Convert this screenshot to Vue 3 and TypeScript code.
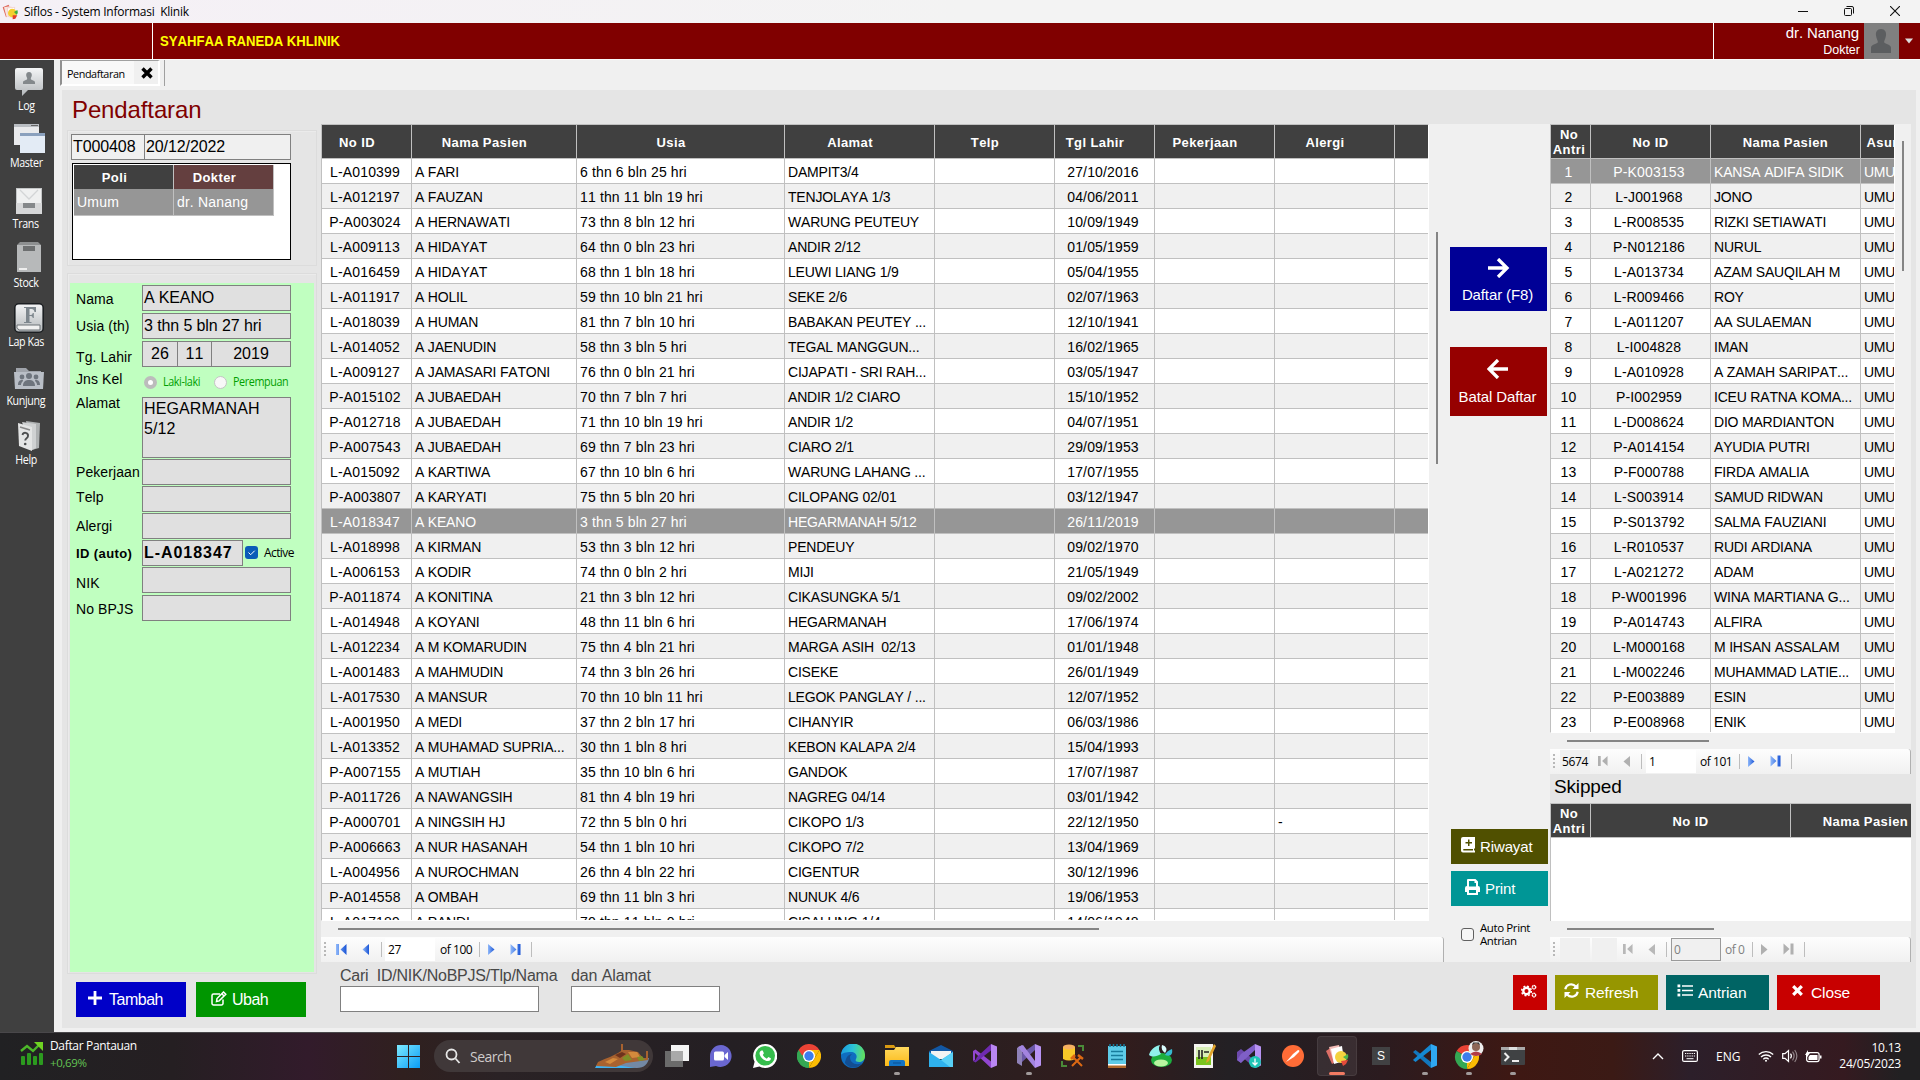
<script setup lang="ts">
interface Patient { id: string; name: string; age: string; addr: string; born: string; allergy?: string }

const rawPatients = `L-A010399|A FARI|6 thn 6 bln 25 hri|DAMPIT3/4|27/10/2016
L-A012197|A FAUZAN|11 thn 11 bln 19 hri|TENJOLAYA 1/3|04/06/2011
P-A003024|A HERNAWATI|73 thn 8 bln 12 hri|WARUNG PEUTEUY|10/09/1949
L-A009113|A HIDAYAT|64 thn 0 bln 23 hri|ANDIR 2/12|01/05/1959
L-A016459|A HIDAYAT|68 thn 1 bln 18 hri|LEUWI LIANG 1/9|05/04/1955
L-A011917|A HOLIL|59 thn 10 bln 21 hri|SEKE 2/6|02/07/1963
L-A018039|A HUMAN|81 thn 7 bln 10 hri|BABAKAN PEUTEY ...|12/10/1941
L-A014052|A JAENUDIN|58 thn 3 bln 5 hri|TEGAL MANGGUN...|16/02/1965
L-A009127|A JAMASARI FATONI|76 thn 0 bln 21 hri|CIJAPATI - SRI RAH...|03/05/1947
P-A015102|A JUBAEDAH|70 thn 7 bln 7 hri|ANDIR 1/2 CIARO|15/10/1952
P-A012718|A JUBAEDAH|71 thn 10 bln 19 hri|ANDIR 1/2|04/07/1951
P-A007543|A JUBAEDAH|69 thn 7 bln 23 hri|CIARO 2/1|29/09/1953
L-A015092|A KARTIWA|67 thn 10 bln 6 hri|WARUNG LAHANG ...|17/07/1955
P-A003807|A KARYATI|75 thn 5 bln 20 hri|CILOPANG 02/01|03/12/1947
L-A018347|A KEANO|3 thn 5 bln 27 hri|HEGARMANAH 5/12|26/11/2019
L-A018998|A KIRMAN|53 thn 3 bln 12 hri|PENDEUY|09/02/1970
L-A006153|A KODIR|74 thn 0 bln 2 hri|MIJI|21/05/1949
P-A011874|A KONITINA|21 thn 3 bln 12 hri|CIKASUNGKA 5/1|09/02/2002
L-A014948|A KOYANI|48 thn 11 bln 6 hri|HEGARMANAH|17/06/1974
L-A012234|A M KOMARUDIN|75 thn 4 bln 21 hri|MARGA ASIH  02/13|01/01/1948
L-A001483|A MAHMUDIN|74 thn 3 bln 26 hri|CISEKE|26/01/1949
L-A017530|A MANSUR|70 thn 10 bln 11 hri|LEGOK PANGLAY / ...|12/07/1952
L-A001950|A MEDI|37 thn 2 bln 17 hri|CIHANYIR|06/03/1986
L-A013352|A MUHAMAD SUPRIA...|30 thn 1 bln 8 hri|KEBON KALAPA 2/4|15/04/1993
P-A007155|A MUTIAH|35 thn 10 bln 6 hri|GANDOK|17/07/1987
P-A011726|A NAWANGSIH|81 thn 4 bln 19 hri|NAGREG 04/14|03/01/1942
P-A000701|A NINGSIH HJ|72 thn 5 bln 0 hri|CIKOPO 1/3|22/12/1950|-
P-A006663|A NUR HASANAH|54 thn 1 bln 10 hri|CIKOPO 7/2|13/04/1969
L-A004956|A NUROCHMAN|26 thn 4 bln 22 hri|CIGENTUR|30/12/1996
P-A014558|A OMBAH|69 thn 11 bln 3 hri|NUNUK 4/6|19/06/1953
L-A017189|A PANDI|70 thn 11 bln 0 hri|CISALUNG 1/4|14/06/1948`

const patients: Patient[] = rawPatients.split('\n').map((line) => {
  const [id, name, age, addr, born, allergy] = line.split('|')
  return { id, name, age, addr, born, allergy }
})
const selectedId = 'L-A018347'

const queue: [string, string][] = [
  ['P-K003153', 'KANSA ADIFA SIDIK'], ['L-J001968', 'JONO'], ['L-R008535', 'RIZKI SETIAWATI'],
  ['P-N012186', 'NURUL'], ['L-A013734', 'AZAM SAUQILAH M'], ['L-R009466', 'ROY'],
  ['L-A011207', 'AA SULAEMAN'], ['L-I004828', 'IMAN'], ['L-A010928', 'A ZAMAH SARIPAT...'],
  ['P-I002959', 'ICEU RATNA KOMA...'], ['L-D008624', 'DIO MARDIANTON'], ['P-A014154', 'AYUDIA PUTRI'],
  ['P-F000788', 'FIRDA AMALIA'], ['L-S003914', 'SAMUD RIDWAN'], ['P-S013792', 'SALMA FAUZIANI'],
  ['L-R010537', 'RUDI ARDIANA'], ['L-A021272', 'ADAM'], ['P-W001996', 'WINA MARTIANA G...'],
  ['P-A014743', 'ALFIRA'], ['L-M000168', 'M IHSAN ASSALAM'], ['L-M002246', 'MUHAMMAD LATIE...'],
  ['P-E003889', 'ESIN'], ['P-E008968', 'ENIK'],
]

const mainHeads = ['No ID', 'Nama Pasien', 'Usia', 'Alamat', 'Telp', 'Tgl Lahir', 'Pekerjaan', 'Alergi', '']
</script>

<template>
  <div class="screen">
    <svg width="0" height="0" class="defs">
      <defs>
        <linearGradient id="silver" x1="0" y1="0" x2="0" y2="1"><stop offset="0" stop-color="#f4f5f6" /><stop offset="1" stop-color="#b4b8bb" /></linearGradient>
        <linearGradient id="nav" x1="0" y1="0" x2="1" y2="0"><stop offset="0" stop-color="#8fb8fa" /><stop offset="1" stop-color="#1a55d6" /></linearGradient>
        <linearGradient id="win" x1="0" y1="0" x2="1" y2="1"><stop offset="0" stop-color="#7deaff" /><stop offset="1" stop-color="#0a9cf5" /></linearGradient>
        <linearGradient id="edge" x1="0" y1="0.3" x2="1" y2="0.4"><stop offset="0" stop-color="#1a9be0" /><stop offset=".5" stop-color="#2cc3d6" /><stop offset="1" stop-color="#62e05c" /></linearGradient>
        <linearGradient id="folder" x1="0" y1="0" x2="0" y2="1"><stop offset="0" stop-color="#ffd95e" /><stop offset="1" stop-color="#fbb917" /></linearGradient>
      </defs>
    </svg>

    <header class="titlebar">
      <svg class="app-ico" width="16" height="16" viewBox="0 0 24 24">
        <path d="M1 5l9-4 6 14-10 5z" fill="#e0675a" /><path d="M3 5l11-2 3 14-10 3z" fill="#f7e4df" />
        <path d="M8 6l11-1-1 15-8-1z" fill="#fff" stroke="#e8a59c" stroke-width=".6" />
        <circle cx="15.500" cy="13.500" r="6.500" fill="#f4cf2f" /><path d="M18 12l5-3c1 3 1 5-1 7z" fill="#3fae3c" /><path d="M16 17l7 0-3 5-4 1z" fill="#e33b2b" />
      </svg>
      <span class="app-name">Siflos - System Informasi&nbsp; Klinik</span>
      <div class="win-ctl">
        <svg width="10" height="10" viewBox="0 0 10 10"><path d="M0 5.500h10" stroke="#111" /></svg>
        <svg width="10" height="10" viewBox="0 0 10 10" fill="none" stroke="#111"><rect x=".5" y="2.500" width="7" height="7" rx="1" /><path d="M2.500 .5h5.500a1.500 1.500 0 0 1 1.500 1.500v5.500" /></svg>
        <svg width="10" height="10" viewBox="0 0 10 10"><path d="M0 0l10 10M10 0l-10 10" stroke="#111" stroke-width="1.100" /></svg>
      </div>
    </header>

    <div class="brand">
      <div class="brand-left"></div>
      <div class="brand-name"><span>SYAHFAA RANEDA KHLINIK</span></div>
      <div class="brand-user"><span class="u1">dr. Nanang</span><span class="u2">Dokter</span></div>
      <div class="avatar">
        <svg width="20" height="24" viewBox="0 0 20 24"><path d="M10 0c4 0 5.500 3 5 6.500-.4 3-1.700 5-1.900 6.500.3 2 6.400 2 6.900 5.500v5.500h-20v-5.500c.5-3.500 6.500-3.500 6.900-5.500-.2-1.500-1.500-3.500-1.900-6.500-.5-3.500 1-6.500 5-6.500z" fill="#5c5e60" /></svg>
      </div>
      <div class="drop"><svg width="8" height="6" viewBox="0 0 8 6"><path d="M0 .5h8l-4 5z" fill="#ddd" /></svg></div>
    </div>

    <div class="body">
      <nav class="side">
        <a class="nav"><svg width="30" height="30" viewBox="0 0 30 30"><path d="M3 1h24a2 2 0 0 1 2 2v18a2 2 0 0 1-2 2h-13l-6 6v-6h-5a2 2 0 0 1-2-2v-18a2 2 0 0 1 2-2z" fill="url(#silver)" /><path d="M15 5c2 0 3 1.500 2.800 3.500-.2 1.500-1 2-1 3.500.2 1.500 4.200 1 4.200 3.500v1.500h-12v-1.500c0-2.500 4-2 4.200-3.500 0-1.500-.8-2-1-3.500-.2-2 .8-3.500 2.800-3.500z" fill="#83888b" /></svg><span>Log</span></a>
        <a class="nav"><svg width="32" height="32" viewBox="0 0 32 32"><rect x="1" y="2" width="25" height="21" fill="#e9eaec" /><path d="M1 2h25v3h-25z" fill="#b9bdc2" /><path d="M18 3h7v1h-7z" fill="#666" /><rect x="7" y="11" width="25" height="20" fill="#e3ebf5" /><path d="M7 11h25v3h-25z" fill="#8aa0bd" /></svg><span>Master</span></a>
        <a class="nav"><svg width="28" height="28" viewBox="0 0 28 28"><rect x="1" y="1" width="26" height="26" fill="#c4c6c7" /><path d="M2 2h24v14h-24z" fill="#eff0f0" /><path d="M5 3l9 9 9-9" fill="none" stroke="#d3d5d6" stroke-width="1.300" /><path d="M1 16h26v11h-26z" fill="#d6d7d8" /><path d="M8 16h12v5h-12z" fill="#85888a" /></svg><span>Trans</span></a>
        <a class="nav"><svg width="26" height="32" viewBox="0 0 26 32"><path d="M4 0h18l3 3v27h-24v-27z" fill="#8d8f90" /><path d="M1 3h24v27h-24z" fill="#b7b9ba" /><path d="M7 4h12v5h-12z" fill="#6d6f70" /><path d="M3 26h8v2h-8z" fill="#eee" /></svg><span>Stock</span></a>
        <a class="nav"><svg width="30" height="30" viewBox="0 0 30 30"><rect x=".8" y=".8" width="28.400" height="28.400" rx="4" fill="url(#silver)" stroke="#1c1f22" stroke-width="1.600" /><path d="M3 22h23v5h-21q-3-2-2-5z" fill="#f1f1f1" stroke="#6d7276" /><path d="M10 4h12v5h-1.500q-.5-3-3-3h-2v6h1.500q1.500 0 1.800-2h1v5h-1q-.3-2-1.800-2h-1.500v6h2v1h-7.500v-1h2v-14h-2z" fill="#7d868d" /></svg><span>Lap Kas</span></a>
        <a class="nav"><svg width="30" height="26" viewBox="0 0 30 26"><path d="M2 2h10l3 3h12v4h-25z" fill="#9fa3aa" /><path d="M0 6h30l-1 17h-28z" fill="#b9bec6" /><g fill="#6e747d"><circle cx="15" cy="10" r="3" /><circle cx="8" cy="11" r="2.400" /><circle cx="22" cy="11" r="2.400" /><path d="M9 20c0-5 3-6 6-6s6 1 6 6zM4 19c0-4 2-5 4-5 1 0 1 0 1 1-2 2-2 3-2 4zM26 19c0-4-2-5-4-5-1 0-1 0-1 1 2 2 2 3 2 4z" /></g></svg><span>Kunjung</span></a>
        <a class="nav"><svg width="24" height="30" viewBox="0 0 24 30"><path d="M9 0l14 2-1 25-7 2z" fill="#aeb1b2" /><path d="M5 1l14 2v24l-4 2z" fill="#cfd1d2" /><path d="M1 2l14 4v24l-13-5z" fill="#e4e5e5" /><path d="M5.500 14c.5-3.500 6-2.500 5.500 1 0 2.500-2.800 2-2.800 4.500" fill="none" stroke="#4d4f50" stroke-width="1.900" /><circle cx="8.200" cy="23" r="1.300" fill="#4d4f50" /><path d="M3 6l10 3" stroke="#888" stroke-width="1.500" /></svg><span>Help</span></a>
      </nav>

      <main class="main">
        <div class="tabs">
          <div class="tab"><span>Pendaftaran</span><b><svg width="12" height="12" viewBox="0 0 12 12"><path d="M1.500 1.500l9 9M10.500 1.500l-9 9" stroke="#000" stroke-width="3.400" /></svg></b></div>
          <i class="tab-end"></i>
        </div>

        <section class="panel">
          <div class="left">
            <h1>Pendaftaran</h1>
            <div class="box box1">
              <div class="reg"><span>T000408</span><span>20/12/2022</span></div>
              <div class="poli">
                <div class="ph"><b>Poli</b><b class="dk">Dokter</b></div>
                <div class="pr"><span>Umum</span><span>dr. Nanang</span></div>
              </div>
            </div>
            <div class="box box2">
              <div class="form">
                <div class="f h28"><label>Nama</label><div class="in">A KEANO</div></div>
                <div class="f h28 us"><label>Usia (th)</label><div class="in age-in">3 thn 5 bln 27 hri</div></div>
                <div class="f h28 tg"><label>Tg. Lahir</label><div class="in trio"><span>26</span><span>11</span><span>2019</span></div></div>
                <div class="f jk"><label>Jns Kel</label><i class="radio on"></i><em>Laki-laki</em><i class="radio"></i><em>Perempuan</em></div>
                <div class="f al"><label>Alamat</label><div class="in area">HEGARMANAH<br />5/12</div></div>
                <div class="f h27 d1"><label>Pekerjaan</label><div class="in"></div></div>
                <div class="f h27"><label>Telp</label><div class="in"></div></div>
                <div class="f h27 d1"><label>Alergi</label><div class="in"></div></div>
                <div class="f h27 d2"><label class="bold">ID (auto)</label><div class="in idin">L-A018347</div>
                  <svg class="chk" width="13" height="13" viewBox="0 0 13 13"><rect width="13" height="13" rx="3" fill="#0a5cb8" /><path d="M3.500 6.500l2.200 2.200 4-4" fill="none" stroke="#fff" /></svg><span class="act">Active</span></div>
                <div class="f h28 d3"><label>NIK</label><div class="in"></div></div>
                <div class="f h28 d2"><label>No BPJS</label><div class="in"></div></div>
              </div>
            </div>
            <div class="lbtns">
              <button class="tambah"><svg width="14" height="14" viewBox="0 0 14 14"><path d="M7 0v14M0 7h14" stroke="#fff" stroke-width="2.800" /></svg><span>Tambah</span></button>
              <button class="ubah"><svg width="16" height="16" viewBox="0 0 16 16" fill="none" stroke="#fff" stroke-width="1.500"><path d="M9 3h-6.500a1.500 1.500 0 0 0-1.500 1.500v8a1.500 1.500 0 0 0 1.500 1.500h8a1.500 1.500 0 0 0 1.500-1.500v-4" /><path d="M5.500 10.500l.5-3 6.500-6.500 2.300 2.300-6.600 6.600zM10.800 2.700l2.300 2.300" /></svg><span>Ubah</span></button>
            </div>
          </div>

          <div class="rest">
            <div class="cols">
              <div class="mid">
                <div class="grid-wrap">
                  <div class="grid main-grid">
                    <div class="row head"><b v-for="(h, i) in mainHeads" :key="i">{{ h }}</b></div>
                    <div v-for="p in patients" :key="p.id" class="row" :class="{ sel: p.id === selectedId }">
                      <span class="c num">{{ p.id }}</span><span class="nm">{{ p.name }}</span><span class="num">{{ p.age }}</span><span class="nm">{{ p.addr }}</span><span></span><span class="c num">{{ p.born }}</span><span></span><span>{{ p.allergy }}</span><span></span>
                    </div>
                  </div>
                  <div class="vbar"><i class="vthumb"></i></div>
                </div>
                <div class="hbar"><i class="hthumb m"></i></div>
                <div class="pager main-pager">
                  <i class="grip"></i>
                  <svg class="first" width="11" height="11" viewBox="0 0 11 11"><path d="M0 0h3v11h-3zM10.500 0v11l-6-5.500z" fill="url(#nav)" /></svg>
                  <svg class="prev" width="7" height="11" viewBox="0 0 7 11"><path d="M7 0v11l-6.500-5.500z" fill="url(#nav)" /></svg>
                  <i class="sep"></i><span class="pg">27</span><span class="of">of 100</span><i class="sep"></i>
                  <svg class="next" width="7" height="11" viewBox="0 0 7 11"><path d="M0 0v11l6.500-5.500z" fill="url(#nav)" /></svg>
                  <svg class="last" width="11" height="11" viewBox="0 0 11 11"><path d="M7.500 0h3v11h-3zM.5 0v11l6-5.500z" fill="url(#nav)" /></svg>
                  <i class="sep"></i>
                </div>
              </div>

              <div class="acts">
                <button class="daftar"><svg width="22" height="20" viewBox="0 0 22 20"><path d="M0 10h18M10 1l9 9-9 9" fill="none" stroke="#fff" stroke-width="3.300" /></svg><span>Daftar (F8)</span></button>
                <button class="batal"><svg width="22" height="20" viewBox="0 0 22 20"><path d="M21 10h-18M11 1l-9 9 9 9" fill="none" stroke="#fff" stroke-width="3.300" /></svg><span>Batal Daftar</span></button>
                <button class="riw"><svg width="14" height="16" viewBox="0 0 14 16"><path d="M2 0h12v11.500h-1v2h1v2h-12a2 2 0 0 1-2-2v-11.500a2 2 0 0 1 2-2z" fill="#fff" /><path d="M2.300 12h9.700v1.500h-9.700zM7 2.500h1.500v2.500h2.500v1.500h-2.500v2.500h-1.500v-2.500h-2.500v-1.500h2.500z" fill="#505000" /></svg><span>Riwayat</span></button>
                <button class="prn"><svg width="15" height="16" viewBox="0 0 15 16"><path d="M2 7v-6a1 1 0 0 1 1-1h7.500l2.500 2.500v4.500a2 2 0 0 1 2 2v4h-2v3h-11v-3h-2v-4a2 2 0 0 1 2-2z" fill="#fff" /><path d="M4 2h5.500v2h1.500v3.500h-7zM4 11h7v3h-7z" fill="#009696" /></svg><span>Print</span></button>
                <div class="auto"><i></i><span>Auto Print<br />Antrian</span></div>
              </div>

              <div class="right">
                <div class="grid-wrap rw">
                  <div class="grid queue">
                    <div class="row head"><b class="two">No<br />Antri</b><b>No ID</b><b>Nama Pasien</b><b class="asu">Asuransi</b></div>
                    <div v-for="(q, i) in queue" :key="q[0]" class="row" :class="{ sel: i === 0 }">
                      <span class="c no">{{ i + 1 }}</span><span class="c num">{{ q[0] }}</span><span class="nm">{{ q[1] }}</span><span>UMUM</span>
                    </div>
                  </div>
                  <div class="vbar"><i class="vthumb r"></i></div>
                </div>
                <div class="hbar"><i class="hthumb r1"></i></div>
                <div class="pager rp">
                  <i class="grip"></i><span class="total">5674</span>
                  <svg class="first" width="10" height="12" viewBox="0 0 11 11"><path d="M0 0h3v11h-3zM10.500 0v11l-6-5.500z" fill="#b0b0b0" /></svg>
                  <svg class="prev" width="7" height="11" viewBox="0 0 7 11"><path d="M7 0v11l-6.500-5.500z" fill="#b0b0b0" /></svg>
                  <i class="sep"></i><span class="pg">1</span><span class="of">of 101</span><i class="sep"></i>
                  <svg class="next" width="7" height="11" viewBox="0 0 7 11"><path d="M0 0v11l6.500-5.500z" fill="url(#nav)" /></svg>
                  <svg class="last" width="11" height="12" viewBox="0 0 11 11"><path d="M7.500 0h3v11h-3zM.5 0v11l6-5.500z" fill="url(#nav)" /></svg>
                  <i class="sep"></i>
                </div>
                <div class="skip">Skipped</div>
                <div class="grid skipped"><div class="row head"><b class="two">No<br />Antri</b><b>No ID</b><b>Nama Pasien</b></div></div>
                <div class="hbar"><i class="hthumb r2"></i></div>
                <div class="pager rp rp2">
                  <i class="grip"></i><span class="blank"></span><span class="blank b2"></span>
                  <svg class="first" width="10" height="12" viewBox="0 0 11 11"><path d="M0 0h3v11h-3zM10.500 0v11l-6-5.500z" fill="#b8b8b8" /></svg>
                  <svg class="prev" width="7" height="11" viewBox="0 0 7 11"><path d="M7 0v11l-6.500-5.500z" fill="#b8b8b8" /></svg>
                  <i class="sep"></i><span class="pg">0</span><span class="of">of 0</span><i class="sep"></i>
                  <svg class="next" width="7" height="11" viewBox="0 0 7 11"><path d="M0 0v11l6.500-5.500z" fill="#b0b0b0" /></svg>
                  <svg class="last" width="11" height="12" viewBox="0 0 11 11"><path d="M7.500 0h3v11h-3zM.5 0v11l6-5.500z" fill="#b0b0b0" /></svg>
                  <i class="sep"></i>
                </div>
              </div>
            </div>

            <div class="bottom">
              <div class="search s1"><label>Cari&nbsp; ID/NIK/NoBPJS/Tlp/Nama</label><div></div></div>
              <div class="search s2"><label>dan Alamat</label><div></div></div>
              <div class="bbtns">
                <button class="gear"><svg width="16" height="14" viewBox="0 0 16 14"><circle cx="5.500" cy="7" r="3.200" fill="none" stroke="#fff" stroke-width="2.400" /><circle cx="5.500" cy="7" r="4.800" fill="none" stroke="#fff" stroke-width="1.600" stroke-dasharray="1.900 1.870" /><circle cx="13" cy="3.200" r="1.700" fill="none" stroke="#fff" stroke-width="1.400" stroke-dasharray="1.400 .3" /><circle cx="13" cy="11" r="1.700" fill="none" stroke="#fff" stroke-width="1.400" stroke-dasharray="1.400 .3" /></svg></button>
                <button class="refresh"><svg width="15" height="15" viewBox="0 0 15 15"><path d="M1.300 6.300a6 6 0 0 1 10.500-2.800M13.700 8.700a6 6 0 0 1-10.500 2.800" fill="none" stroke="#fff" stroke-width="2.200" /><path d="M14.500 0v6h-6zM.5 15v-6h6z" fill="#fff" /></svg><span>Refresh</span></button>
                <button class="antri"><svg width="16" height="13" viewBox="0 0 16 13"><path d="M5 2h11M5 6.500h11M5 11h11" stroke="#fff" stroke-width="1.600" /><g fill="#fff"><rect x=".5" y=".5" width="2.800" height="2.800" /><rect x=".5" y="5" width="2.800" height="2.800" /><rect x=".5" y="9.600" width="2.800" height="2.800" /></g></svg><span>Antrian</span></button>
                <button class="close"><svg width="11" height="11" viewBox="0 0 11 11"><path d="M1.200 1.200l8.600 8.600M9.800 1.200l-8.600 8.600" stroke="#fff" stroke-width="3.200" /></svg><span>Close</span></button>
              </div>
            </div>
          </div>
        </section>
      </main>
    </div>

    <footer class="taskbar">
      <div class="widget">
        <svg width="23" height="23" viewBox="0 0 23 23"><g fill="#2c9a1f"><rect x="1" y="14" width="4" height="9" rx="1" /><rect x="7" y="11" width="4" height="12" rx="1" /><rect x="13" y="14" width="4" height="9" rx="1" /><rect x="19" y="11" width="4" height="12" rx="1" /></g><path d="M1 9l6-5 6 5 7-7" fill="none" stroke="#4db82a" stroke-width="2.400" /><path d="M14 0h9v9z" fill="#6fd322" /></svg>
        <div><span>Daftar Pantauan</span><span class="up">+0,69%</span></div>
      </div>
      <svg class="start" width="23" height="23" viewBox="0 0 23 23"><path d="M0 0h11v11h-11zM12 0h11v11h-11zM0 12h11v11h-11zM12 12h11v11h-11z" fill="url(#win)" /></svg>
      <div class="pill">
        <svg width="16" height="16" viewBox="0 0 16 16" fill="none" stroke="#e6e6e6" stroke-width="1.800"><circle cx="6.500" cy="6.500" r="5" /><path d="M10.500 10.500l4 4.500" /></svg><span>Search</span>
        <svg class="town" width="56" height="26" viewBox="0 0 56 26"><path d="M10 24q12-6 20-6l24-3c-1 6-5 10-12 10z" fill="#7389a5" /><path d="M0 25q2-5 8-5l32 5z" fill="#3fb4f5" /><path d="M3 19q6-3 12-5l8-4 3-2v-7h2v6l6 0 9 2 5 6h3v-7h2v9l-22 3-10 4-20-1z" fill="#a8622f" /><path d="M10 19l8-4 5 1-8 5zM33 9l9 0 3 5-8 1z" fill="#d48a3c" /><path d="M27 15l6-4 4 6-7 1zM42 14l5-1 3 4-6 1z" fill="#7f8f27" /><path d="M20 12l7-3 4 2-6 4z" fill="#6e331d" /></svg>
      </div>
      <div class="apps">
        <i><svg width="24" height="22" viewBox="0 0 24 22"><rect x="6" width="18" height="16" fill="#f4f4f4" /><rect y="6" width="18" height="16" fill="#6b6b6b" /><path d="M6 6h12v10h-12z" fill="#a9a9a9" /></svg></i>
        <i><svg width="24" height="24" viewBox="0 0 24 24"><path d="M12 1a11 11 0 1 1-5 21l-6 1v-11a11 11 0 0 1 11-11z" fill="#6a67d0" /><rect x="5" y="7.500" width="10" height="9" rx="1.500" fill="#fff" /><path d="M15.500 11l3.500-3v8l-3.500-3z" fill="#fff" /></svg></i>
        <i><svg width="24" height="24" viewBox="0 0 24 24"><path d="M12 0a12 12 0 1 1-5.500 22.500l-6.500 1.500 1.600-6.200a12 12 0 0 1 10.400-17.800z" fill="#fff" /><circle cx="12.200" cy="11.800" r="9.800" fill="#35bd4c" /><path d="M8.500 6.500l1.200 0 1.200 2.800-1.100 1.600q1.500 2.800 4 3.800l1.500-1.700 2.600 1.300q0 2.600-2.800 2.800c-4 0-8.600-4.100-8.600-8.100q.2-2 2-2.500z" fill="#fff" /></svg></i>
        <i><svg width="24" height="24" viewBox="0 0 24 24"><path d="M12 12l-10.400-6a12 12 0 0 1 20.800 0z" fill="#ea4335" /><path d="M12 12v12a12 12 0 0 1-10.400-18z" fill="#34a853" /><path d="M12 24l5.200-9 5.200-9a12 12 0 0 1-10.400 18z" fill="#fbbc04" /><path d="M12 6h10.400l-5.200 9-5.200 9z" fill="#fbbc04" /><path d="M12 6h-10.400l3 5 7.400 2z" fill="#ea4335" /><path d="M1.600 6l5.200 9 5.200 3-1 6a12 12 0 0 1-9.400-18z" fill="#34a853" /><circle cx="12" cy="12" r="6" fill="#fff" /><circle cx="12" cy="12" r="4.700" fill="#3b7ded" /></svg></i>
        <i><svg width="24" height="24" viewBox="0 0 24 24"><circle cx="12" cy="12" r="12" fill="#0f6dc0" /><path d="M0 11a12 12 0 0 1 24 1c0 4-3 6-6 6s-4-1-3-3c2-4-1-7-5-7-5 0-9 1-10 3z" fill="url(#edge)" /><path d="M9 13c0 6 6 9 12 6-4 6-13 6-17 0 0 0 1-9 7-9-1 1-2 2-2 3z" fill="#134e92" /></svg></i>
        <i class="run"><svg width="24" height="22" viewBox="0 0 24 22"><path d="M0 0h9l2 3h-11z" fill="#d99a12" /><path d="M0 5l9 0 2-3h13v19h-24z" fill="url(#folder)" /><path d="M4 21v-4a2 2 0 0 1 2-2h12a2 2 0 0 1 2 2v4z" fill="#1273c4" /><path d="M8 18h8" stroke="#0b4f90" /></svg></i>
        <i><svg width="24" height="22" viewBox="0 0 24 22"><path d="M0 6l12-6 12 6v6h-24z" fill="#1257a3" /><path d="M2 6h20v8h-20z" fill="#f3f3f3" /><path d="M0 7l12 8 12-8v15h-24z" fill="#2fb2ee" /><path d="M24 7l-12 8 9 7h3z" fill="#58d0f6" /></svg></i>
        <i><svg width="24" height="24" viewBox="0 0 24 24"><path d="M0 7l2.500-1.500 15.500 12v6.500l-16-15v7l-2 1z" fill="#9246d0" /><path d="M0 17l2.500 1.500 15.500-12v-6.500l-14 13-1.500 3z" fill="#6e2ab0" /><path d="M18 0l6 2.500v19l-6 2.500z" fill="#b987f2" /></svg></i>
        <i class="run"><svg width="24" height="24" viewBox="0 0 24 24"><path d="M0 16l4 3 14-13v-6l-14 10z" fill="#6b58a8" /><path d="M0 4l5-3v21l-5-3z" fill="#8f82b8" /><path d="M1 3l5-2 12 16v7z" fill="#a384e0" /><path d="M18 0l6 2.500v19l-6 2.500z" fill="#b893f3" /></svg></i>
        <i><svg width="24" height="24" viewBox="0 0 24 24"><path d="M2 3v12q6 3 12 0v-12z" fill="#f9c928" /><ellipse cx="8" cy="3" rx="6" ry="2.500" fill="#f6b061" /><path d="M17 2h5v5M1 17v5h5" fill="none" stroke="#4a8b38" stroke-width="2" /><path d="M11 22l9-9M12 13l9 9" stroke="#dd6913" stroke-width="2" /><path d="M10 15l4-4M17 11l5 4" stroke="#dd6913" stroke-width="2.500" /></svg></i>
        <i><svg width="20" height="24" viewBox="0 0 20 24"><path d="M1 2h18v19h-18z" fill="#5ecbe8" /><path d="M1 20h18v4h-18z" fill="#b06a2c" /><path d="M1 20h18v1.500h-18z" fill="#fff" /><path d="M3 0v3M6.500 0v3M10 0v3M13.500 0v3M17 0v3" stroke="#167b9d" stroke-width="1.500" /><path d="M4 7.500h12M4 11.500h12M4 15.500h12" stroke="#167b9d" stroke-width="1.600" /></svg></i>
        <i><svg width="24" height="24" viewBox="0 0 24 24"><ellipse cx="12.500" cy="16" rx="10.500" ry="7" fill="#1cae3e" /><ellipse cx="12" cy="19" rx="7" ry="3.500" fill="#b9f5a0" /><path d="M0 11c1-5 6-9 11-10-2 3-1 6 1 9-4 2-8 4-12 1z" fill="#8ff0ec" /><path d="M13 1c4 1 6 4 3 8-3-2-4-5-3-8z" fill="#d9fbfd" /><path d="M23 5c1 5-1 8-7 6 1-3 4-5 7-6z" fill="#37b9cf" /></svg></i>
        <i><svg width="24" height="24" viewBox="0 0 24 24"><path d="M1 0h19v24h-19z" fill="#f5f5f0" /><path d="M3 3h15v18h-15z" fill="#d9efb7" /><path d="M3 13h15v8h-15z" fill="#7ac41e" /><path d="M6 6v9M9 6v9M11 8h5" stroke="#222" stroke-width="1.600" /><path d="M21 0l2 2-7 15-3 2 1-4z" fill="#e3a42a" /></svg></i>
        <i><svg width="24" height="24" viewBox="0 0 24 24"><path d="M0 8l4-3 14 12v7l-14-12v7l-4-3z" fill="#6d49ad" /><path d="M0 16l4 3 14-13v-6l-14 10z" fill="#7f5fc6" /><path d="M18 0l6 2.500v19l-6 2.500z" fill="#b893f3" /><circle cx="18" cy="18" r="6" fill="#20c5b5" /><path d="M18 14.500v6M15.500 18.500l2.500 2.500 2.500-2.500" fill="none" stroke="#fff" stroke-width="1.300" /></svg></i>
        <i><svg width="24" height="24" viewBox="0 0 24 24"><circle cx="12" cy="12" r="11" fill="#ff6c37" /><path d="M5 18l7-8 5-4q2 0 1 2l-5 5z" fill="#fff" /></svg></i>
        <i class="cur"><svg width="24" height="24" viewBox="0 0 24 24"><path d="M1 7l6-4 5 14-5 3z" fill="#d9635b" /><path d="M4 3l10-2 3 15-8 3z" fill="#f0b5b0" /><path d="M6 5l11-3 2 15-10 3z" fill="#fff" /><circle cx="16" cy="13" r="6" fill="#f4cf2f" /><path d="M18 13l5-3q1 3-1 6z" fill="#3fae3c" /><path d="M16 17l7-1-2 4-3 2z" fill="#e33b2b" /></svg></i>
        <i><span class="s">S</span></i>
        <i class="run"><svg width="24" height="24" viewBox="0 0 24 24"><path d="M0 8l2.500-2 15.500 12v6l-17-15z" fill="#1277bd" /><path d="M0 16l2.500 2 15.500-12v-6l-17 15z" fill="#1488d2" /><path d="M18 0l6 2.500v19l-6 2.500z" fill="#2fa8f2" /></svg></i>
        <i class="run"><svg width="30" height="30" viewBox="0 0 30 30"><g transform="translate(1 4)"><path d="M12 12l-10.400-6a12 12 0 0 1 20.800 0z" fill="#ea4335" /><path d="M12 12v12a12 12 0 0 1-10.400-18z" fill="#34a853" /><path d="M12 24l5.200-9 5.200-9a12 12 0 0 1-10.400 18z" fill="#fbbc04" /><path d="M12 6h10.400l-5.200 9-5.200 9z" fill="#fbbc04" /><circle cx="12" cy="12" r="6" fill="#fff" /><circle cx="12" cy="12" r="4.700" fill="#3b7ded" /></g><circle cx="22" cy="7.500" r="7.500" fill="#eee" /><circle cx="22" cy="6" r="4" fill="#8e6656" /><path d="M18 4.500q4-5 8 0l-1-3h-6z" fill="#333" /><path d="M16 13q6-5 12 0-6 4-12 0z" fill="#b23b44" /></svg></i>
        <i class="run"><svg width="24" height="18" viewBox="0 0 24 18"><rect width="24" height="18" rx="1" fill="#404244" /><path d="M0 0h24v3h-24z" fill="#a9a9a9" /><path d="M8 0h8v3h-8z" fill="#ddd" /><path d="M3.500 6l4 4-4 4M11 14h7" fill="none" stroke="#eee" stroke-width="2" /></svg></i>
      </div>
      <div class="tray">
        <svg class="t1" width="12" height="7" viewBox="0 0 12 7"><path d="M1 6l5-5 5 5" fill="none" stroke="#fff" stroke-width="1.400" /></svg>
        <svg class="t2" width="16" height="12" viewBox="0 0 16 12" fill="none" stroke="#fff"><rect x=".6" y=".6" width="14.800" height="10.800" rx="1.500" stroke-width="1.200" /><path d="M3 3.500h10M3 6h10" stroke-dasharray="1.300 .9" stroke-width="1.200" /><path d="M4.500 8.700h7" /></svg>
        <span class="eng">ENG</span>
        <svg class="t3" width="16" height="12" viewBox="0 0 16 12" fill="none" stroke="#fff" stroke-width="1.300"><path d="M.8 4.500a10.500 10.500 0 0 1 14.400 0M3 7a7.200 7.200 0 0 1 10 0M5.300 9.200a4 4 0 0 1 5.400 0" /><circle cx="8" cy="10.700" r="1" fill="#fff" stroke="none" /></svg>
        <svg class="t4" width="16" height="14" viewBox="0 0 16 14" fill="none" stroke="#fff" stroke-width="1.200"><path d="M.7 4.700h2.300l3.500-3.200v11l-3.500-3.200h-2.300z" /><path d="M8.500 4.700q1.800 2.300 0 4.600" /><path d="M10.500 2.700q3.200 4.300 0 8.600M12.700 1q4.300 6 0 12" opacity=".45" /></svg>
        <svg class="t5" width="17" height="13" viewBox="0 0 17 13"><rect x="1.600" y="2.600" width="12.500" height="9" rx="2" fill="none" stroke="#fff" stroke-width="1.200" /><path d="M5 5h7.500v5h-9v-3zM15 5.500h1.500v3h-1.500zM3 0l-3 5h2l-.5 3 3.500-5h-2z" fill="#fff" /></svg>
        <div class="clock"><span>10.13</span><span>24/05/2023</span></div>
      </div>
    </footer>
  </div>
</template>

<style>
body { margin: 0; overflow: hidden; }
</style>
<style scoped>
.screen, .screen * { box-sizing: border-box; }
.screen { width: 1920px; height: 1080px; display: flex; flex-direction: column; overflow: hidden; background: #f0f0f0; font-family: "Liberation Sans", Arial, sans-serif; color: #000; white-space: nowrap; font-kerning: none; }
.defs { position: absolute; }
svg { display: block; flex: none; }
button { border: 0; padding: 0; display: flex; align-items: center; color: #fff; font: 16px "Liberation Sans", Arial, sans-serif; white-space: nowrap; }
.titlebar { height: 23px; background: linear-gradient(90deg, #f5f0f6, #f3f3f3 50%); display: flex; align-items: center; padding-left: 2px; flex: none; }
.app-name { font: 12px "Open Sans", "Noto Sans", sans-serif; margin-left: 6px; letter-spacing: -.25px; }
.win-ctl { margin-left: auto; display: flex; gap: 36px; padding-right: 20px; margin-top: -2px; }
.brand { height: 37px; display: flex; background: #800000; border-bottom: 1px solid #fafafa; color: #fff; flex: none; }
.brand-left { width: 153px; border-right: 1px solid #fff; }
.brand-name { flex: 1; padding-left: 7px; line-height: 37px; color: #ff0; font-weight: 700; font-size: 14.500px; border-right: 1px solid #fff; }
.brand-name span { display: inline-block; transform: scaleX(.905); transform-origin: left; }
.brand-user { width: 150px; display: flex; flex-direction: column; align-items: flex-end; padding-right: 5px; }
.u1 { font-size: 15px; line-height: 20px; letter-spacing: -.1px; } .u2 { font-size: 12.500px; line-height: 14px; margin-right: -1px; }
.avatar { width: 35px; background: #808080; display: flex; align-items: center; justify-content: center; padding-right: 2px; }
.drop { width: 21px; display: flex; align-items: center; justify-content: center; padding-right: 2px; }
.body { flex: none; height: 972px; display: flex; }
.side { width: 54px; background: #404040; display: flex; flex-direction: column; align-items: center; }
.nav { height: 59px; display: flex; flex-direction: column; align-items: center; justify-content: flex-end; color: #fff; font: 12px/14px "Open Sans", "Noto Sans", sans-serif; letter-spacing: -.4px; width: 54px; }
.nav svg { margin-left: 3px; margin-bottom: 2px; }
.nav span { transform: scaleX(.89); margin-left: -2px; }
.nav:nth-child(1) { height: 53px; } .nav:nth-child(2) { height: 57px; } .nav:nth-child(3) { height: 61px; }
.main { flex: 1; display: flex; flex-direction: column; min-width: 0; }
.tabs { height: 30px; display: flex; padding: 0 0 0 6px; }
.tab { width: 100px; height: 26px; display: flex; border: 2px solid #fff; border-top-color: #a0a0a0; border-left: 2px solid #909090; border-top-width: 1px; background: #f8f8f8; font: 11.500px/25px "Open Sans", "Noto Sans", sans-serif; letter-spacing: -.45px; padding-left: 5px; }
.tab span { transform: scaleX(.94); transform-origin: left; width: 60px; }
.tab b { margin-left: auto; width: 24px; background: #f0f0f0; display: flex; align-items: center; justify-content: center; padding-left: 1px; }
.tab-end { width: 2px; height: 26px; margin-left: 4px; border-left: 1px solid #a0a0a0; }
.panel { margin: 0 4px 0 8px; height: 938px; background: #e5e5e5; display: flex; }
.left { width: 259px; padding-left: 5px; display: flex; flex-direction: column; }
h1 { margin: 0 0 0 5px; height: 40px; font-size: 24px; font-weight: 400; color: #800000; line-height: 40px; letter-spacing: -.12px; }
.box { border: 1px solid #dcdcdc; box-shadow: inset 1px 1px #ebebeb; width: 250px; }
.box1 { height: 136px; padding: 3px 3px; }
.reg { width: 220px; height: 26px; border: 1px solid #808080; display: flex; font-size: 16px; line-height: 23px; background: #f0f0f0; }
.reg span { padding-left: 1px; letter-spacing: -.1px; } .reg span:first-child { width: 73px; border-right: 1px solid #808080; }
.poli { margin: 3px 0 0 1px; width: 219px; height: 97px; border: 1px solid #000; background: #fff; }
.ph, .pr { display: grid; grid-template-columns: 100px 100px; height: 25px; margin-left: 1px; width: 200px; }
.ph { margin-top: 1px; height: 24px; }
.ph b, .pr span { border-right: 1px solid #c0c0c0; border-bottom: 1px solid #c0c0c0; }
.ph b { background: #404040; color: #fff; font-size: 13px; letter-spacing: .4px; text-align: center; padding-right: 18px; line-height: 25px; }
.ph .dk { background: #643f3f; }
.pr span { background: #969696; color: #fff; font-size: 14px; letter-spacing: .2px; padding-left: 3px; line-height: 26px; }
.box2 { margin-top: 7px; height: 701px; padding: 9px 2px 1px 2px; }
.form { background: #c0ffc0; height: 689px; width: 244px; padding: 2px 0 0 6px; font-size: 14px; }
.f { display: flex; align-items: flex-start; }
.f label { width: 66px; line-height: 28px; letter-spacing: .08px; flex: none; }
.h28 { height: 28px; } .h27 { height: 27px; } .f.us label { line-height: 26px; } .f.tg label { line-height: 32px; }
.in { width: 149px; height: 26px; border: 1px solid #808080; background: #e0e0e0; font-size: 16px; line-height: 23px; padding-left: 1px; flex: none; letter-spacing: -.15px; }
.age-in { letter-spacing: -.1px; }
.trio { display: flex; padding: 0; text-align: center; letter-spacing: 0; }
.trio span:nth-child(1) { width: 35px; border-right: 1px solid #808080; }
.trio span:nth-child(2) { width: 34px; border-right: 1px solid #808080; }
.trio span:nth-child(3) { flex: 1; }
.jk { height: 28px; } .f.jk label { line-height: 21px; }
.jk em { font: 12px/26px "Open Sans", "Noto Sans", sans-serif; color: #00a000; letter-spacing: -.45px; margin-left: 6px; width: 51px; transform: scaleX(.9); transform-origin: left; }
.radio { width: 13px; height: 13px; border-radius: 50%; background: #f8f8f8; border: 1px solid #c4c4c4; margin: 7px 0 0 2px; flex: none; }
.jk em + .radio { margin-left: 0; }
.radio.on { border: 4px solid #bcbcbc; background: #fff; }
.al { height: 62px; } .f.al label { line-height: 12px; }
.area { height: 61px; line-height: 20px; padding-top: 1px; letter-spacing: .1px; }
.h27 label { line-height: 22px; } .f.h27.d1 label { line-height: 26px; } .f.h27.d2 label { line-height: 27px; } .f.d3 label { line-height: 32px; } .f.h28.d2 label { line-height: 28px; }
.f .bold { font-weight: 700; font-size: 13px; letter-spacing: .4px; }
.idin { width: 101px; font-weight: 700; letter-spacing: .95px; }
.chk { margin: 6px 0 0 2px; } .act { font: 12px/26px "Open Sans", "Noto Sans", sans-serif; letter-spacing: -.6px; margin-left: 6px; }
.lbtns { display: flex; gap: 10px; padding: 8px 0 0 9px; }
.lbtns button { width: 110px; height: 35px; letter-spacing: -.5px; }
.tambah { background: #0000c8; padding-left: 12px; } .tambah svg { margin-top: -3px; } .tambah span { margin: 1px 0 0 7px; }
.ubah { background: #009600; padding-left: 15px; } .ubah svg { margin-top: -1px; } .ubah span { margin: 1px 0 0 5px; }
.rest { flex: 1; padding-top: 34px; display: flex; flex-direction: column; min-width: 0; }
.cols { height: 838px; display: flex; background: #f0f0f0; width: 1590px; }
.mid { width: 1123px; }
.grid-wrap { height: 797px; display: flex; }
.grid { overflow: hidden; border-top: 1px solid #c0c0c0; border-left: 1px solid #c0c0c0; background: #fff; }
.main-grid { width: 1108px; border-right: 1px solid #fff; border-bottom: 1px solid #fff; }
.row { display: grid; height: 25px; }
.main-grid .row { grid-template-columns: 90px 165px 208px 150px 120px 100px 120px 120px 100px; }
.row > * { border-right: 1px solid #c0c0c0; border-bottom: 1px solid #c0c0c0; padding-left: 3px; font-size: 14px; line-height: 27px; overflow: hidden; white-space: pre; background: #fff; }
.row:nth-child(odd) > * { background: #f0f0f0; }
.row .num { letter-spacing: .14px; } .row .nm { letter-spacing: -.2px; }
.row .c { text-align: center; padding: 0 3px 0 0; }
.row.sel > * { background: #969696; color: #fff; }
.row.head { height: 34px; }
.row.head > b { background: #404040; color: #fff; font-size: 13px; line-height: 35px; text-align: center; padding: 0; letter-spacing: .4px; }
.main-grid .head > b { padding-right: 19px; }
.row.head > .asu { padding-right: 9px; }
.vbar { flex: 1; }
.vthumb { display: block; width: 2px; height: 232px; background: #858585; margin: 108px 0 0 7px; }
.vthumb.r { height: 130px; margin: 17px 0 0 7px; }
.hbar { height: 16px; padding-top: 7px; }
.hthumb { display: block; height: 2px; background: #858585; } .hthumb.m { margin-left: 17px; width: 761px; } .hthumb.r1 { margin-left: 17px; width: 142px; } .hthumb.r2 { margin-left: 17px; width: 147px; }
.pager { height: 25px; background: linear-gradient(#fdfdfd, #f1f1f1); display: flex; align-items: center; font: 12px "Open Sans", "Noto Sans", sans-serif; letter-spacing: -.45px; border-right: 1px solid #b0b0b0; border-radius: 0 3px 0 0; padding-bottom: 1px; }
.grip { width: 2px; height: 14px; margin-left: 3px; background: repeating-linear-gradient(#b8b8b8 0 2px, transparent 2px 4px); }
.sep { width: 1px; height: 15px; background: #bdbdbd; }
.first { margin-left: 10px; } .prev { margin-left: 15px; } .main-pager .sep { margin-left: 12px; }
.main-pager .pg { width: 50px; height: 23px; line-height: 23px; margin-left: 3px; background: #fff; padding-left: 3px; } .main-pager .of { margin-left: 5px; width: 33px; }
.main-pager .of + .sep { margin-left: 6px; } .main-pager .next { margin-left: 8px; } .main-pager .last { margin-left: 15px; } .main-pager .last + .sep { margin-left: 10px; }
.total { width: 30px; height: 23px; line-height: 23px; background: #f0f0f0; text-align: center; margin-left: 5px; letter-spacing: -.3px; }
.rp .first { margin-left: 8px; } .rp .prev { margin-left: 15px; } .rp .sep { margin-left: 11px; }
.rp .pg { width: 50px; height: 23px; line-height: 23px; margin-left: 4px; background: #fff; padding-left: 3px; } .rp .of { margin-left: 4px; width: 33px; }
.rp .of + .sep { margin-left: 6px; } .rp .next { margin-left: 8px; } .rp .last { margin-left: 15px; } .rp .last + .sep { margin-left: 10px; }
.blank { width: 30px; height: 23px; background: #f0f0f0; margin-left: 5px; } .b2 { width: 25px; margin-left: 2px; }
.rp2 .first { margin-left: 6px; }
.rp2 .pg { background: #f0f0f0; border: 1px solid #9a9a9a; color: #808080; padding-left: 2px; line-height: 21px; } .rp2 .of { width: 21px; color: #808080; }
.acts { width: 106px; display: flex; flex-direction: column; padding: 123px 0 0 6px; }
.acts button { width: 97px; flex: none; font-size: 15px; letter-spacing: -.12px; }
.daftar { height: 64px; background: #000096; flex-direction: column; } .daftar svg { margin-top: 11px; } .daftar span { margin: 8px 2px 0 0; }
.batal { height: 69px; margin-top: 36px; background: #960000; flex-direction: column; } .batal svg { margin: 12px 2px 0 0; } .batal span { margin: 9px 2px 0 0; }
.riw { height: 35px; margin: 413px 0 0 1px; background: #505000; padding-left: 10px; } .riw svg { margin-top: -3px; } .riw span { margin-left: 5px; }
.prn { height: 35px; margin: 7px 0 0 1px; background: #009696; padding-left: 14px; } .prn svg { margin-top: -3px; } .prn span { margin-left: 5px; }
.auto { display: flex; margin: 15px 0 0 11px; font: 11.500px/13px "Open Sans", "Noto Sans", sans-serif; letter-spacing: -.4px; }
.auto i { width: 13px; height: 13px; border: 1px solid #606060; border-radius: 3px; background: #f6f6f6; margin: 7px 6px 0 0; }
.right { width: 361px; }
.rw { height: 609px; }
.queue { width: 345px; border-right: 1px solid #fff; border-bottom: 1px solid #fff; }
.queue .row { grid-template-columns: 40px 120px 150px 80px; } .queue .row .no { padding-right: 4px; letter-spacing: .2px; }
.queue .row:not(.head) > :last-child { letter-spacing: -.3px; }
.row.head > .two { line-height: 15px; padding: 2px 3px 0 0; }
.skip { height: 29px; background: #e5e5e5; font-size: 19px; line-height: 26px; padding-left: 4px; letter-spacing: -.15px; }
.skipped { height: 118px; } .skipped .row { grid-template-columns: 40px 200px 150px; }
.bottom { flex: 1; display: flex; }
.search { width: 199px; margin-left: 19px; } .search label { display: block; height: 24px; line-height: 28px; font-size: 16px; color: #484848; letter-spacing: -.24px; }
.search div { height: 26px; border: 1px solid #808080; background: #fff; } .s2 { width: 149px; margin-left: 32px; } .s2 label { letter-spacing: -.1px; }
.bbtns { margin-left: auto; display: flex; gap: 8px; padding: 13px 36px 0 0; }
.bbtns button { width: 103px; height: 35px; font-size: 15.500px; padding-left: 9px; letter-spacing: -.1px; }
.bbtns svg { margin-top: -4px; } .bbtns span { margin-left: 6px; }
.bbtns .gear { width: 34px; background: #c80000; padding-left: 8px; } .refresh { background: #969600; } .bbtns .antri { background: #006464; padding-left: 11px; } .bbtns .antri span { margin-left: 5px; } .bbtns .close { background: #c80000; padding-left: 15px; } .bbtns .close span { margin-left: 8px; }
.taskbar { height: 48px; flex: none; display: flex; align-items: center; border-top: 1px solid #49474a; color: #fff; font-family: "Open Sans", "Noto Sans", sans-serif; font-size: 12px; background: linear-gradient(90deg, #212123 0, #251f22 9%, #321b2b 16%, #30201f 21%, #2a2225 26%, #241f23 38%, #272022 48%, #331c1c 58%, #232024 64%, #2b1b1f 72%, #3e1813 79%, #3b1a15 84%, #2c1f2a 88%, #351a20 96%, #212022 99%); }
.widget { width: 396px; padding-left: 20px; display: flex; } .widget > div { display: flex; flex-direction: column; margin-left: 7px; line-height: 17px; letter-spacing: -.34px; margin-top: -5px; } .widget svg { margin-top: 0; }
.up { color: #63c353; font-size: 11.500px; }
.start { margin: -1px 14px 0 1px; }
.pill { width: 219px; height: 32px; border-radius: 16px; background: #403839; display: flex; align-items: center; padding-left: 11px; font-size: 14px; color: #cfcbcb; margin-right: 2px; margin-top: -1px; overflow: hidden; }
.pill span { margin-left: 9px; letter-spacing: -.5px; } .town { margin-left: auto; margin-right: 2px; }
.apps { display: flex; margin-top: -1px; }
.apps i { width: 44px; height: 46px; display: flex; align-items: center; justify-content: center; position: relative; font-style: normal; }
.run::after { content: ""; position: absolute; width: 6px; height: 3px; border-radius: 2px; background: #a09a9a; bottom: 4px; left: 19px; }
.cur::before { content: ""; position: absolute; inset: 3px 2px; background: rgba(255,255,255,.08); border: 1px solid rgba(255,255,255,.07); border-radius: 4px; }
.cur::after { content: ""; position: absolute; width: 16px; height: 3px; border-radius: 2px; background: #f27b63; bottom: 4px; left: 14px; }
.s { width: 18px; height: 18px; background: #414143; font: 12px/18px "Liberation Sans", sans-serif; text-align: center; }
.tray { display: flex; align-items: center; flex: 1; margin-top: -1px; }
.t1 { margin-left: 117px; } .t2 { margin-left: 18px; } .eng { margin-left: 18px; width: 42px; } .t4 { margin-left: 8px; } .t5 { margin-left: 7px; }
.clock { margin-left: auto; margin-right: 19px; display: flex; flex-direction: column; align-items: flex-end; line-height: 16px; letter-spacing: -.2px; }
</style>
